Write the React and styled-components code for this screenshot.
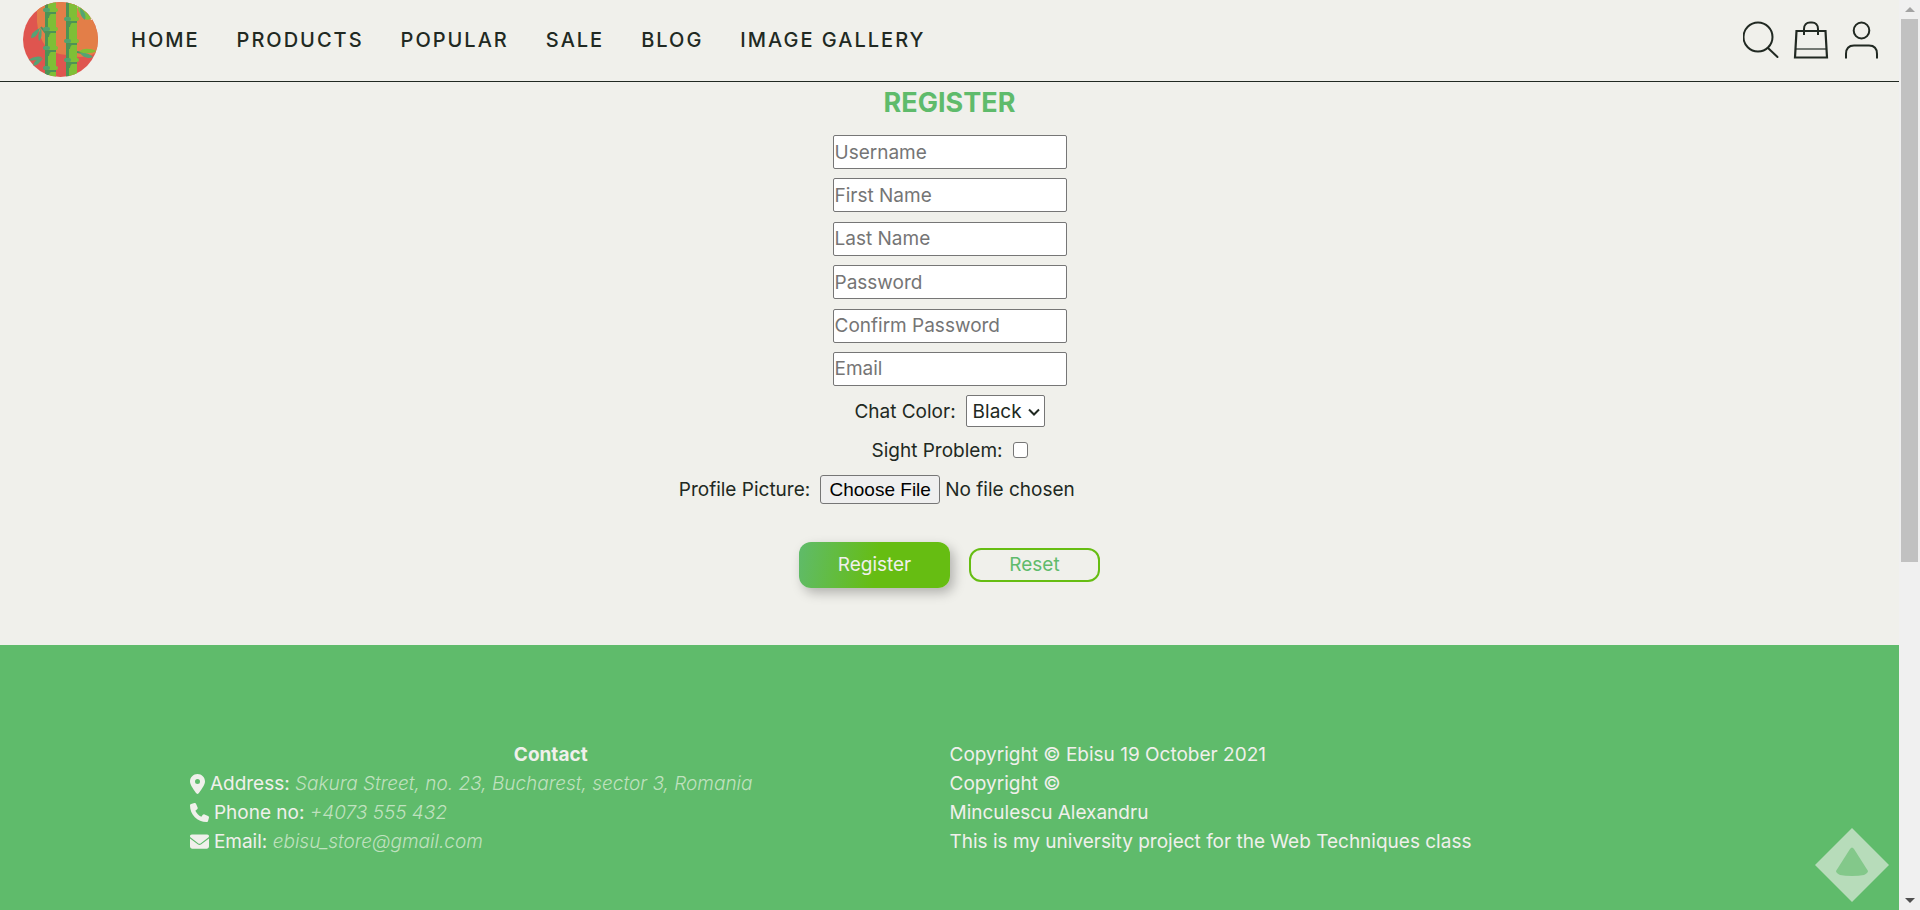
import React from "react";
import styled, { createGlobalStyle } from "styled-components";

const ink = "#212922";
const paper = "#f0f0eb";
const green = "#5fbb6b";
const lime = "#66bd12";

const GlobalStyle = createGlobalStyle`
  *, *::before, *::after { box-sizing: border-box; }
  body {
    margin: 0;
    background: ${paper};
    color: ${ink};
    font: 400 19px/29px Inter, "Open Sans", sans-serif;
  }
  input, select, button { font: inherit; color: inherit; }
`;

const Viewport = styled.div`
  display: flex;
  height: 100vh;
  overflow: hidden;
`;

const Page = styled.div`
  flex: 1;
  min-width: 0;
  display: flex;
  flex-direction: column;
`;

const Header = styled.header`
  display: flex;
  align-items: center;
  height: 82px;
  flex: none;
  padding: 0 20px 2px 23px;
  border-bottom: 1px solid ${ink};
`;

const LogoLink = styled.a`
  display: block;
  width: 75px;
  height: 75px;
  margin-right: 33px;
  svg { display: block; }
`;

const Nav = styled.nav`
  display: flex;
  flex: 1;
  gap: 37px;
  padding-top: 2px;
`;

const NavLink = styled.a`
  color: ${ink};
  font-size: 20px;
  font-weight: 500;
  letter-spacing: 2px;
  text-decoration: none;
  white-space: nowrap;
`;

const Tools = styled.div`
  display: flex;
  gap: 14px;
`;

const ToolButton = styled.button`
  width: 36px;
  height: 38px;
  padding: 0;
  border: 0;
  background: none;
  svg { display: block; }
`;

const Form = styled.form`
  flex: none;
  display: flex;
  flex-direction: column;
  align-items: center;
  height: 563px;
`;

const Title = styled.h1`
  margin: 0;
  padding: 3px 0 14px;
  color: ${green};
  font-size: 27px;
  line-height: 36px;
  font-weight: 700;
`;

const Fields = styled.div`
  display: flex;
  flex-direction: column;
  justify-content: space-between;
  width: 234px;
  height: 251px;
`;

const TextField = styled.input`
  width: 100%;
  height: 34px;
  padding: 1px;
  border: 1px solid #767676;
  border-radius: 2px;
  background: #fff;
  &::placeholder { color: #757575; opacity: 1; }
`;

const Row = styled.div`
  display: flex;
  align-items: center;
  gap: 10px;
  height: ${(p) => p.$height}px;
`;

const ColorRow = styled(Row)`
  margin-top: 9px;
`;

const SelectBox = styled.div`
  position: relative;
  svg {
    position: absolute;
    right: 5px;
    top: 11px;
    pointer-events: none;
  }
`;

const Select = styled.select`
  appearance: none;
  display: block;
  width: 79px;
  height: 32px;
  padding: 0 0 0 6px;
  border: 1px solid #767676;
  border-radius: 2px;
  background: #fff;
`;

const Checkbox = styled.input`
  appearance: none;
  width: 15px;
  height: 16px;
  margin: 0;
  border: 1px solid #767676;
  border-radius: 3px;
  background: #fff;
  &:checked { background: ${green}; }
`;

const FileInput = styled.input`
  width: 400px;
  height: 29px;
  line-height: 27px;
  &::file-selector-button {
    width: 120px;
    height: 29px;
    padding: 0;
    margin: 0 5px 0 0;
    border: 1px solid #767676;
    border-radius: 3px;
    background: #efefef;
    color: #000;
    font: 400 19px/25px "Liberation Sans", Arial, sans-serif;
  }
`;

const Actions = styled.div`
  display: flex;
  align-items: center;
  gap: 19px;
  margin-top: 37px;
`;

const SubmitButton = styled.button`
  width: 151px;
  height: 46px;
  padding: 0 0 2px;
  border: 0;
  border-radius: 12px;
  background: linear-gradient(100deg, ${green}, ${lime} 52%);
  box-shadow: 4px 5px 12px rgba(0, 0, 0, 0.26);
  color: ${paper};
`;

const ResetButton = styled.button`
  width: 131px;
  height: 34px;
  padding: 0 0 2px;
  border: 2px solid ${lime};
  border-radius: 12px;
  background: none;
  color: ${green};
`;

const Footer = styled.footer`
  flex: 1;
  display: grid;
  grid-template-columns: 1fr 1fr;
  align-content: start;
  padding: 95px 10% 0;
  background: ${green};
  color: ${paper};
  white-space: nowrap;
`;

const Contact = styled.address`
  padding-right: 5%;
  font-style: normal;
`;

const ContactTitle = styled.h2`
  margin: 0;
  font-size: 19px;
  line-height: 29px;
  font-weight: 700;
  text-align: center;
`;

const ContactLine = styled.div`
  display: flex;
  align-items: center;
  gap: 5px;
  svg { flex: none; }
`;

const ContactValue = styled.i`
  color: #bfe1bf;
  font-weight: 300;
`;

const Line = styled.p`
  margin: 0;
`;

const TopLink = styled.a`
  position: fixed;
  right: 31px;
  bottom: 8px;
  svg { display: block; }
`;

const ScrollBar = styled.div`
  flex: none;
  display: flex;
  flex-direction: column;
  align-items: center;
  width: 21px;
  background: #f0f0f0;
`;

const ScrollArrow = styled.span`
  height: 19px;
  padding-top: 7px;
  svg { display: block; }
`;

const ScrollTrack = styled.div`
  flex: 1;
  width: 17px;
`;

const ScrollThumb = styled.div`
  height: 62.3%;
  background: #c1c1c1;
`;

const stalks = [
  { x: 22, nodes: [10, 29, 48, 68] },
  { x: 43, nodes: [19, 41, 60] },
];

const Logo = () => (
  <svg width="75" height="75" viewBox="0 0 75 75" aria-hidden="true">
    <clipPath id="disc"><circle cx="37.5" cy="37.5" r="37.5" /></clipPath>
    <g clipPath="url(#disc)">
      <rect width="75" height="75" fill="#df554f" />
      <path d="M14 0V20Q15 34 23 45Q31 52 44 53Q62 58 75 50V0Z" fill="#e37e48" />
      <path d="M54 0H75V16L68 18Q66 8 58 6L56 8L54 5Z" fill={paper} />
      <path d="M25 34L18 25M54 50L60 51" stroke="#4d9163" strokeWidth="2" />
      {stalks.map((s) => (
        <g key={s.x}>
          <rect x={s.x} width="4" height="75" fill="#4d9355" />
          <rect x={s.x + 3} width="8" height="75" fill="#7fbf36" />
          {s.nodes.map((y) => (
            <g key={y}>
              <rect x={s.x} y={y} width="11" height="2" fill="#4d9355" />
              <path d={`M${s.x + 2} ${y + 6}V${y + 1}H${s.x + 8}Q${s.x + 4} ${y + 2} ${s.x + 4} ${y + 6}Z`} fill="#4d9355" />
              <rect x={s.x + 2} y={y - 4} width="11" height="4" rx="2" fill="#7fbf36" />
              <rect x={s.x - 2} y={y - 4} width="7" height="4" rx="2" fill="#51a36f" />
            </g>
          ))}
        </g>
      ))}
      <path d="M54 4Q64 2 68 17L64 18Q56 14 54 4Z" fill="#80c33b" />
      <path d="M57 6Q64 11 62 18Q57 15 57 6ZM17 26Q8 30 8 36Q14 36 17 26ZM18 26Q14 33 16 39Q20 35 18 26ZM19 55Q12 53 5 58Q13 60 19 55ZM20 56Q11 57 10 64Q16 63 20 56ZM57 51Q64 50 70 55Q62 58 57 51Z" fill="#55a374" />
      <path d="M56 50Q61 44 74 49Q66 53 56 50Z" fill="#7fbf36" />
    </g>
  </svg>
);

const SearchIcon = () => (
  <svg width="36" height="38" viewBox="0 0 36 38" fill="none" stroke={ink} strokeWidth="2" strokeLinecap="round">
    <circle cx="15" cy="16" r="14.5" />
    <path d="M25 27L34.500 36" />
  </svg>
);

const BagIcon = () => (
  <svg width="36" height="38" viewBox="0 0 36 38" fill="none" stroke={ink}>
    <path d="M3.500 10H32.500L34 36.500H2Z" strokeWidth="2.200" />
    <path d="M2.500 28H33.500" strokeWidth="1.200" />
    <path d="M11 14V8C11 4 13.500 1.500 17 1.500H19C22.500 1.500 25 4 25 8V14" strokeWidth="2" />
  </svg>
);

const UserIcon = () => (
  <svg width="36" height="38" viewBox="0 0 36 38" fill="none" stroke={ink} strokeWidth="2">
    <ellipse cx="18.500" cy="9.500" rx="7.800" ry="8" />
    <path d="M3 37.500V33C3 27 6 24.500 11 24.500H26C31 24.500 34 27 34 33V37.500" />
  </svg>
);

const PinIcon = () => (
  <svg width="15" height="20" viewBox="0 0 384 512" fill="currentColor">
    <path d="M215.700 499.200C267 435 384 279.400 384 192C384 86 298 0 192 0S0 86 0 192c0 87.400 117 243 168.300 307.200c12.300 15.300 35.100 15.300 47.400 0zM192 128a64 64 0 1 1 0 128 64 64 0 1 1 0-128z" />
  </svg>
);

const PhoneIcon = () => (
  <svg width="19" height="19" viewBox="0 0 512 512" fill="currentColor">
    <path d="M164.900 24.600c-7.700-18.600-28-28.500-47.400-23.200l-88 24C12.100 30.200 0 46 0 64C0 311.400 200.600 512 448 512c18 0 33.800-12.100 38.600-29.500l24-88c5.300-19.400-4.600-39.700-23.200-47.400l-96-40c-16.300-6.800-35.200-2.100-46.300 11.600L304.700 368C234.300 334.700 177.300 277.700 144 207.300L193.300 167c13.700-11.200 18.400-30 11.600-46.300l-40-96z" />
  </svg>
);

const MailIcon = () => (
  <svg width="19" height="19" viewBox="0 0 512 512" fill="currentColor">
    <path d="M48 64C21.500 64 0 85.500 0 112c0 15.100 7.100 29.300 19.200 38.400L236.800 313.600c11.400 8.500 27 8.500 38.400 0L492.800 150.400c12.100-9.100 19.200-23.300 19.200-38.400c0-26.500-21.500-48-48-48H48zM0 176V384c0 35.300 28.700 64 64 64H448c35.300 0 64-28.700 64-64V176L294.400 339.200c-22.800 17.100-54 17.100-76.800 0L0 176z" />
  </svg>
);

const navItems = ["HOME", "PRODUCTS", "POPULAR", "SALE", "BLOG", "IMAGE GALLERY"];

const fields = [
  ["Username", "text"],
  ["First Name", "text"],
  ["Last Name", "text"],
  ["Password", "password"],
  ["Confirm Password", "password"],
  ["Email", "email"],
];

const contacts = [
  { icon: <PinIcon />, label: "Address:", value: "Sakura Street, no. 23, Bucharest, sector 3, Romania" },
  { icon: <PhoneIcon />, label: "Phone no:", value: "+4073 555 432" },
  { icon: <MailIcon />, label: "Email:", value: "ebisu_store@gmail.com" },
];

export default function App() {
  return (
    <Viewport>
      <GlobalStyle />
      <Page>
        <Header>
          <LogoLink href="#" aria-label="Ebisu"><Logo /></LogoLink>
          <Nav>
            {navItems.map((item) => <NavLink key={item} href="#">{item}</NavLink>)}
          </Nav>
          <Tools>
            <ToolButton type="button" aria-label="Search"><SearchIcon /></ToolButton>
            <ToolButton type="button" aria-label="Cart"><BagIcon /></ToolButton>
            <ToolButton type="button" aria-label="Account"><UserIcon /></ToolButton>
          </Tools>
        </Header>
        <Form onSubmit={(e) => e.preventDefault()}>
          <Title>REGISTER</Title>
          <Fields>
            {fields.map(([name, type]) => (
              <TextField key={name} type={type} placeholder={name} aria-label={name} />
            ))}
          </Fields>
          <ColorRow $height={32}>
            <label htmlFor="color">Chat Color:</label>
            <SelectBox>
              <Select id="color" defaultValue="Black">
                <option>Black</option>
              </Select>
              <svg width="12" height="12" viewBox="0 0 12 12" fill="none" stroke={ink} strokeWidth="2">
                <path d="M1 3.500L6 8.500L11 3.500" />
              </svg>
            </SelectBox>
          </ColorRow>
          <Row $height={46}>
            <label htmlFor="sight">Sight Problem:</label>
            <Checkbox id="sight" type="checkbox" />
          </Row>
          <Row $height={32}>
            <label htmlFor="picture">Profile Picture:</label>
            <FileInput id="picture" type="file" />
          </Row>
          <Actions>
            <SubmitButton type="submit">Register</SubmitButton>
            <ResetButton type="reset">Reset</ResetButton>
          </Actions>
        </Form>
        <Footer>
          <Contact>
            <ContactTitle>Contact</ContactTitle>
            {contacts.map((c) => (
              <ContactLine key={c.label}>
                {c.icon}
                <span>{c.label} <ContactValue>{c.value}</ContactValue></span>
              </ContactLine>
            ))}
          </Contact>
          <div>
            <Line>Copyright © Ebisu 19 October 2021</Line>
            <Line>Copyright ©</Line>
            <Line>Minculescu Alexandru</Line>
            <Line>This is my university project for the Web Techniques class</Line>
          </div>
        </Footer>
      </Page>
      <TopLink href="#" aria-label="Back to top">
        <svg width="74" height="74" viewBox="0 0 74 74">
          <path d="M37 0L74 37L37 74L0 37Z" fill="#b7dcba" />
          <path d="M35 21Q37 18 39 21L53 43Q53 45 49 47Q44 48 37 48Q30 48 25 47Q21 45 21 43Z" fill="#83c88a" />
        </svg>
      </TopLink>
      <ScrollBar aria-hidden="true">
        <ScrollArrow>
          <svg width="10" height="6" viewBox="0 0 10 6"><path d="M0 5L5 0L10 5Z" fill="#a3a3a3" /></svg>
        </ScrollArrow>
        <ScrollTrack><ScrollThumb /></ScrollTrack>
        <ScrollArrow>
          <svg width="10" height="6" viewBox="0 0 10 6"><path d="M0 0L5 5L10 0Z" fill="#505050" /></svg>
        </ScrollArrow>
      </ScrollBar>
    </Viewport>
  );
}
